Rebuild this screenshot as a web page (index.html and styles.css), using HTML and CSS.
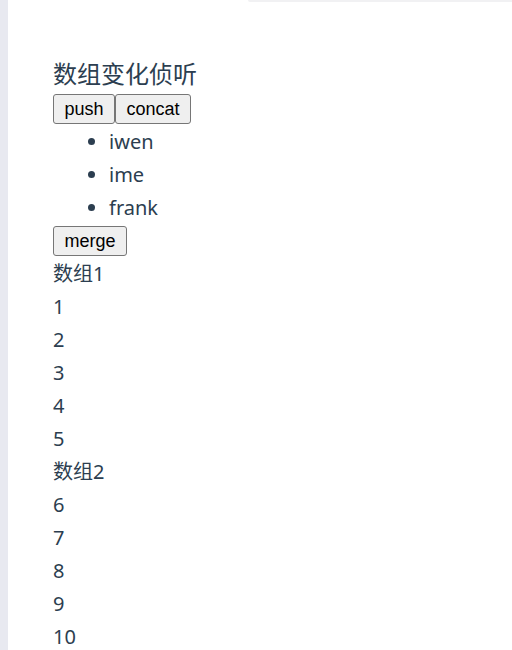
FILE: index.html
```html
<!DOCTYPE html>
<html lang="zh">
<head>
<meta charset="utf-8">
<link rel="stylesheet" href="styles.css">
</head>
<body>
<div class="topbar"></div>
<div class="layout">
  <div class="sidebar"></div>
  <main class="main">
    <h3 class="title">数组变化侦听</h3>
    <div class="btn-row">
      <button class="btn">push</button><button class="btn">concat</button>
    </div>
    <ul class="names">
      <li>iwen</li>
      <li>ime</li>
      <li>frank</li>
    </ul>
    <div class="merge-row">
      <button class="btn">merge</button>
    </div>
    <p class="line">数组1</p>
    <p class="line">1</p>
    <p class="line">2</p>
    <p class="line">3</p>
    <p class="line">4</p>
    <p class="line">5</p>
    <p class="line">数组2</p>
    <p class="line">6</p>
    <p class="line">7</p>
    <p class="line">8</p>
    <p class="line">9</p>
    <p class="line">10</p>
  </main>
</div>
</body>
</html>
```

FILE: styles.css
```css
html, body {
  margin: 0;
  padding: 0;
  background: #ffffff;
  overflow: hidden;
}
body {
  font-family: "Noto Sans", "Noto Sans CJK SC", sans-serif;
  color: #2c3e50;
  height: 650px;
}
.topbar {
  position: absolute;
  top: 0;
  left: 248px;
  right: 0;
  height: 2px;
  background: #f1f1f3;
  border-bottom-left-radius: 4px;
}
.layout {
  display: flex;
  height: 650px;
}
.sidebar {
  width: 8px;
  flex: none;
  background: #e8e9f0;
}
.main {
  padding: 54px 0 0 45px;
  flex: 1;
}
.title {
  margin: 0;
  font-size: 24px;
  font-weight: 400;
  line-height: 40px;
  height: 40px;
}
.btn-row {
  display: flex;
  align-items: flex-start;
  height: 31px;
}
.btn {
  font-family: "Liberation Sans", Arial, sans-serif;
  font-size: 18px;
  color: #000;
  background: #efefef;
  border: 1px solid #767676;
  border-radius: 3px;
  padding: 0 10.5px;
  height: 30px;
  margin: 0;
  line-height: 26px;
}
.names {
  margin: 0;
  padding-left: 56px;
  font-size: 20px;
  line-height: 33px;
}
.merge-row {
  height: 33px;
  display: flex;
  align-items: center;
}
.line {
  margin: 0;
  font-size: 20px;
  line-height: 33px;
  height: 33px;
}
```
